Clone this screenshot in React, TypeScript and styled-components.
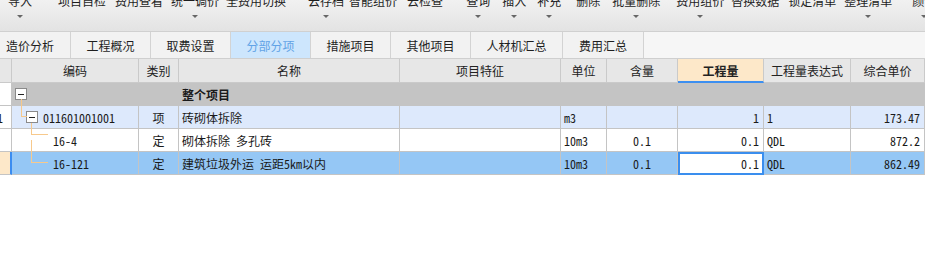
import styled, { createGlobalStyle } from "styled-components"

const GlobalStyle = createGlobalStyle`
    html, body {
        margin: 0;
        padding: 0;
        background: #ffffff;
        overflow: hidden;
    }
    body {
        font-family: "Noto Sans CJK SC", "Noto Sans", sans-serif;
        font-size: 12px;
        color: #222;
    }
`

const Page = styled.div`
    width: 925px;
    height: 267px;
    overflow: hidden;
    background: #fff;
`

const Toolbar = styled.div`
    display: flex;
    height: 31px;
    border-bottom: 1px solid #d0d0d0;
    background: linear-gradient(#f1f1f1, #e3e3e3);
    overflow: hidden;
`

const ToolItem = styled.div<{ $ml: number }>`
    display: flex;
    flex-direction: column;
    align-items: center;
    flex-shrink: 0;
    margin-left: ${p => p.$ml}px;
`

const ToolLabel = styled.span`
    margin-top: -6px;
    line-height: 14px;
    white-space: nowrap;
    color: #1e1e1e;
`

const Caret = styled.i<{ $show: boolean }>`
    margin-top: 7px;
    width: 0;
    height: 0;
    border-left: 3px solid transparent;
    border-right: 3px solid transparent;
    border-top: 3px solid ${p => (p.$show ? "#666" : "transparent")};
`

const TabBar = styled.div`
    display: flex;
    height: 26px;
    border-bottom: 1px solid #cfcfcf;
    background: #f6f6f6;
    overflow: hidden;
`

const Tab = styled.div<{ $w: number; $active?: boolean; $first?: boolean }>`
    flex-shrink: 0;
    width: ${p => p.$w}px;
    margin-left: ${p => (p.$first ? -10 : 0)}px;
    box-sizing: border-box;
    border-right: 1px solid #d3d3d3;
    display: flex;
    align-items: center;
    justify-content: center;
    background: ${p => (p.$active ? "#cde6fd" : "#f2f2f2")};
    color: ${p => (p.$active ? "#62a3e6" : "#1e1e1e")};
`

const COLS = "12px 127px 40px 221px 161px 46px 71px 86px 87px 1fr"

const HeaderRow = styled.div`
    display: grid;
    grid-template-columns: ${COLS};
    height: 24px;
    background: #e7e7e7;
`

const HeadCell = styled.div<{ $hl?: boolean }>`
    box-sizing: border-box;
    border-right: 1px solid #cacaca;
    border-bottom: ${p => (p.$hl ? "2px solid #3d8ff0" : "1px solid #cacaca")};
    display: flex;
    align-items: center;
    justify-content: center;
    background: ${p => (p.$hl ? "#fde8c9" : "transparent")};
    font-weight: ${p => (p.$hl ? 700 : 400)};
    color: #222;
    white-space: nowrap;
    overflow: hidden;
`

const Row = styled.div<{ $bg: string }>`
    display: grid;
    grid-template-columns: ${COLS};
    height: 23px;
    background: ${p => p.$bg};
`

type Align = "left" | "center" | "right"

const Cell = styled.div<{ $align?: Align; $bold?: boolean }>`
    position: relative;
    box-sizing: border-box;
    border-right: 1px solid #c4c4c4;
    border-bottom: 1px solid #c4c4c4;
    display: flex;
    align-items: center;
    justify-content: ${p =>
        p.$align === "center" ? "center" : p.$align === "right" ? "flex-end" : "flex-start"};
    padding: 0 ${p => (p.$align === "right" ? 4 : 3)}px 0 3px;
    font-family: "Noto Sans Mono CJK SC", "Noto Sans CJK SC", monospace;
    font-weight: ${p => (p.$bold ? 700 : 400)};
    font-size: 12px;
    color: #1a1a1a;
    white-space: nowrap;
`

const NumCell = styled.div<{ $cur?: boolean }>`
    box-sizing: border-box;
    background: ${p => (p.$cur ? "#fde8c9" : "#fff")};
    border-right: ${p => (p.$cur ? "2px solid #3b8cf0" : "1px solid #c4c4c4")};
    border-bottom: 1px solid #c4c4c4;
    display: flex;
    align-items: center;
    overflow: hidden;
    font-family: "Noto Sans Mono CJK SC", "Noto Sans CJK SC", monospace;
    color: #1a1a1a;
`

const NumText = styled.span`
    margin-left: -3px;
`

const EditCell = styled(Cell)`
    background: #fff;
    border: 2px solid #3a8eee;
    padding-right: 3px;
`

const TreeCell = styled(Cell)<{ $indent: number }>`
    padding-left: ${p => p.$indent}px;
`

const FoldBox = styled.span`
    box-sizing: border-box;
    width: 12px;
    height: 12px;
    margin-right: 5px;
    border: 1px solid #8a8a8a;
    background: #fff;
    display: flex;
    align-items: center;
    justify-content: center;
    flex-shrink: 0;
    &::after {
        content: "";
        width: 6px;
        height: 1px;
        background: #222;
    }
`

// connector that reaches up into the row above
const Elbow = styled.span<{ $left: number; $top: number; $h: number; $w: number }>`
    position: absolute;
    left: ${p => p.$left}px;
    top: ${p => p.$top}px;
    width: ${p => p.$w}px;
    height: ${p => p.$h}px;
    border-left: 1px solid #f7c98c;
    border-bottom: 1px solid #f7c98c;
    pointer-events: none;
`

const tools = [
    { t: "导入", ml: 8, a: true },
    { t: "项目自检", ml: 26 },
    { t: "费用查看", ml: 9 },
    { t: "统一调价", ml: 8, a: true },
    { t: "全费用切换", ml: 7 },
    { t: "云存档", ml: 22, a: true },
    { t: "智能组价", ml: 5 },
    { t: "云检查", ml: 10 },
    { t: "查询", ml: 23, a: true },
    { t: "插入", ml: 12, a: true },
    { t: "补充", ml: 11, a: true },
    { t: "删除", ml: 15 },
    { t: "批量删除", ml: 12, a: true },
    { t: "费用组价", ml: 16, a: true },
    { t: "替换数据", ml: 7 },
    { t: "锁定清单", ml: 9 },
    { t: "整理清单", ml: 8, a: true },
    { t: "颜色", ml: 20, a: true },
]

const tabs = [
    { t: "造价分析", w: 81 },
    { t: "工程概况", w: 80 },
    { t: "取费设置", w: 80 },
    { t: "分部分项", w: 80, active: true },
    { t: "措施项目", w: 80 },
    { t: "其他项目", w: 80 },
    { t: "人材机汇总", w: 92 },
    { t: "费用汇总", w: 81 },
]

const heads = ["", "编码", "类别", "名称", "项目特征", "单位", "含量", "工程量", "工程量表达式", "综合单价"]

export default function App() {
    return (
        <Page>
            <GlobalStyle />
            <Toolbar>
                {tools.map(item => (
                    <ToolItem key={item.t} $ml={item.ml}>
                        <ToolLabel>{item.t}</ToolLabel>
                        <Caret $show={!!item.a} />
                    </ToolItem>
                ))}
            </Toolbar>
            <TabBar>
                {tabs.map((tab, i) => (
                    <Tab key={tab.t} $w={tab.w} $active={tab.active} $first={i === 0}>
                        {tab.t}
                    </Tab>
                ))}
            </TabBar>
            <HeaderRow>
                {heads.map((h, i) => (
                    <HeadCell key={i} $hl={h === "工程量"}>{h}</HeadCell>
                ))}
            </HeaderRow>

            <Row $bg="#c4c4c4">
                <NumCell />
                <TreeCell $indent={3}>
                    <FoldBox />
                </TreeCell>
                <Cell />
                <Cell $bold>整个项目</Cell>
                <Cell />
                <Cell />
                <Cell />
                <Cell />
                <Cell />
                <Cell />
            </Row>

            <Row $bg="#dde9fc">
                <NumCell>
                    <NumText>1</NumText>
                </NumCell>
                <TreeCell $indent={14}>
                    <Elbow $left={9} $top={-7} $h={17} $w={5} />
                    <FoldBox />
                    011601001001
                </TreeCell>
                <Cell $align="center">项</Cell>
                <Cell>砖砌体拆除</Cell>
                <Cell />
                <Cell>m3</Cell>
                <Cell />
                <Cell $align="right">1</Cell>
                <Cell>1</Cell>
                <Cell $align="right">173.47</Cell>
            </Row>

            <Row $bg="#ffffff">
                <NumCell />
                <TreeCell $indent={41}>
                    <Elbow $left={19} $top={-6} $h={11} $w={16} />
                    16-4
                </TreeCell>
                <Cell $align="center">定</Cell>
                <Cell>砌体拆除 多孔砖</Cell>
                <Cell />
                <Cell>10m3</Cell>
                <Cell $align="center">0.1</Cell>
                <Cell $align="right">0.1</Cell>
                <Cell>QDL</Cell>
                <Cell $align="right">872.2</Cell>
            </Row>

            <Row $bg="#95c7f5">
                <NumCell $cur />
                <TreeCell $indent={41}>
                    <Elbow $left={19} $top={-12} $h={22} $w={16} />
                    16-121
                </TreeCell>
                <Cell $align="center">定</Cell>
                <Cell>建筑垃圾外运 运距5km以内</Cell>
                <Cell />
                <Cell>10m3</Cell>
                <Cell $align="center">0.1</Cell>
                <EditCell $align="right">0.1</EditCell>
                <Cell>QDL</Cell>
                <Cell $align="right">862.49</Cell>
            </Row>
        </Page>
    )
}
